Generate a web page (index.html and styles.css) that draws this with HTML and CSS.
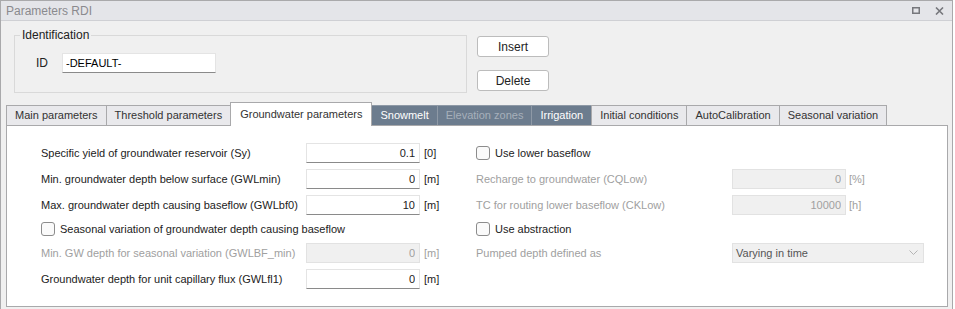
FILE: index.html
```html
<!DOCTYPE html>
<html lang="en">
  <head>
    <meta charset="UTF-8" />
    <title>Parameters RDI</title>
    <link rel="stylesheet" href="styles.css">
  </head>
  <body>
    <div class="window">
      <div class="titlebar">
        <span class="title">Parameters RDI</span>
        <span class="win-btns">
          <svg width="8" height="7" viewBox="0 0 8 7"><rect x="0.75" y="0.75" width="6.5" height="5.5" fill="none" stroke="#76777c" stroke-width="1.5"/></svg>
          <svg width="9" height="8" viewBox="0 0 9 8"><path d="M1 0.5 L8 7.5 M8 0.5 L1 7.5" stroke="#76777c" stroke-width="1.6"/></svg>
        </span>
      </div>

      <div class="body">
        <div class="top">
          <fieldset class="ident">
            <legend>Identification</legend>
            <label for="id">ID</label>
            <input type="text" id="id" class="id-input" value="-DEFAULT-" />
          </fieldset>
          <div class="actions">
            <button type="button" class="btn">Insert</button>
            <button type="button" class="btn">Delete</button>
          </div>
        </div>

        <div class="tabs">
          <div class="tab">Main parameters</div>
          <div class="tab">Threshold parameters</div>
          <div class="tab active">Groundwater parameters</div>
          <div class="tab dark">Snowmelt</div>
          <div class="tab dark off">Elevation zones</div>
          <div class="tab dark">Irrigation</div>
          <div class="tab">Initial conditions</div>
          <div class="tab">AutoCalibration</div>
          <div class="tab">Seasonal variation</div>
        </div>

        <div class="panel">
          <!-- row 1 -->
          <div class="lbl">Specific yield of groundwater reservoir (Sy)</div>
          <input class="num" type="text" value="0.1" />
          <div class="unit">[0]</div>
          <label class="check c-right"><span class="box"></span>Use lower baseflow</label>

          <!-- row 2 -->
          <div class="lbl">Min. groundwater depth below surface (GWLmin)</div>
          <input class="num" type="text" value="0" />
          <div class="unit">[m]</div>
          <div class="lbl off">Recharge to groundwater (CQLow)</div>
          <input class="num" type="text" value="0" disabled />
          <div class="unit off">[%]</div>

          <!-- row 3 -->
          <div class="lbl">Max. groundwater depth causing baseflow (GWLbf0)</div>
          <input class="num" type="text" value="10" />
          <div class="unit">[m]</div>
          <div class="lbl off">TC for routing lower baseflow (CKLow)</div>
          <input class="num" type="text" value="10000" disabled />
          <div class="unit off">[h]</div>

          <!-- row 4 -->
          <label class="check c-left"><span class="box"></span>Seasonal variation of groundwater depth causing baseflow</label>
          <label class="check c-right"><span class="box"></span>Use abstraction</label>

          <!-- row 5 -->
          <div class="lbl off">Min. GW depth for seasonal variation (GWLBF_min)</div>
          <input class="num" type="text" value="0" disabled />
          <div class="unit off">[m]</div>
          <div class="lbl off">Pumped depth defined as</div>
          <div class="select">
            <span>Varying in time</span>
            <svg width="9" height="5" viewBox="0 0 9 5"><path d="M0.5 0.5 L4.5 4.5 L8.5 0.5" fill="none" stroke="#b4b4b4"/></svg>
          </div>

          <!-- row 6 -->
          <div class="lbl">Groundwater depth for unit capillary flux (GWLfl1)</div>
          <input class="num" type="text" value="0" />
          <div class="unit">[m]</div>
        </div>
      </div>
    </div>
  </body>
</html>
```

FILE: styles.css
```css
* {
  box-sizing: border-box;
}
body {
  margin: 0;
  background: #ffffff;
  font-family: "Liberation Sans", Arial, sans-serif;
  font-size: 11px;
  color: #222;
}
.window {
  width: 953px;
  height: 309px;
  border: 1px solid #a9a9ab;
  border-bottom: none;
  background: #f0f0f0;
}
.titlebar {
  height: 20px;
  display: flex;
  align-items: center;
  justify-content: space-between;
  padding: 0 8px 0 5px;
  background: #e4e5e9;
  border-bottom: 1px solid #cfd0d4;
}
.title {
  color: #8a8a8e;
  font-size: 12px;
}
.win-btns {
  display: flex;
  align-items: center;
  gap: 15px;
}
.body {
  padding: 0 4px 0 4px;
}
.top {
  display: flex;
  align-items: flex-start;
  height: 83px;
}
.ident {
  margin: 7px 0 0 9px;
  padding: 0;
  width: 453px;
  height: 65px;
  border: 1px solid #d9d9d9;
  display: flex;
  align-items: center;
}
.ident legend {
  margin-left: 5px;
  padding: 0 2px;
  color: #222;
  font-size: 12px;
}
.ident label {
  margin: 0 0 8px 21px;
  width: 26px;
  font-size: 12px;
}
.id-input {
  width: 154px;
  height: 20px;
  margin-bottom: 8px;
  border: 1px solid #e4e4e4;
  border-bottom-color: #8a8a8a;
  background: #fff;
  font: inherit;
  padding: 0 3px;
}
.actions {
  display: flex;
  flex-direction: column;
  gap: 13px;
  margin: 15px 0 0 10px;
}
.btn {
  width: 72px;
  height: 21px;
  border: 1px solid #bcbcbc;
  border-radius: 3px;
  background: #fff;
  font: inherit;
  font-size: 12px;
  color: #222;
}
.tabs {
  display: flex;
  align-items: flex-end;
  height: 23px;
  margin-top: -2px;
  padding-left: 1px;
}
.tab {
  height: 20px;
  line-height: 19px;
  padding: 0 8px;
  border: 1px solid #a9a9ab;
  border-bottom: none;
  margin-right: -1px;
  background: #e9e9ec;
  color: #333;
  white-space: nowrap;
}
.tab.active {
  height: 24px;
  line-height: 23px;
  padding: 0 9px;
  background: #fff;
  position: relative;
  z-index: 1;
  margin-bottom: -1px;
}
.tab.dark {
  background: #6c7c8e;
  color: #fff;
  border-color: #8e99a6;
}
.tab.dark.off {
  color: #a7b0bb;
}
.panel {
  margin-left: 1px;
  width: 942px;
  height: 182px;
  background: #fff;
  border: 1px solid #a9a9ab;
  padding: 16px 0 0 34px;
  display: grid;
  grid-template-columns: 265px 114px 56px 256px 113px 79px;
  grid-template-rows: 21px 21px 21px 17px 21px 21px;
  row-gap: 5px;
  align-items: center;
}
.lbl {
  white-space: nowrap;
}
.off {
  color: #a0a0a0;
}
.num {
  width: 114px;
  height: 20px;
  border: 1px solid #e4e4e4;
  border-bottom-color: #8a8a8a;
  background: #fff;
  text-align: right;
  padding: 0 4px;
  font: inherit;
  color: #222;
}
.num:disabled {
  background: #f0f0f0;
  border-color: #e2e2e2;
  color: #a0a0a0;
}
.unit {
  padding-left: 4px;
}
.check {
  display: flex;
  align-items: center;
  gap: 5px;
  white-space: nowrap;
}
.c-left {
  grid-column: 1 / 4;
}
.c-right {
  grid-column: 4 / 7;
}
.box {
  width: 14px;
  height: 14px;
  border: 1px solid #8c8c8c;
  border-radius: 3px;
  background: #fafafa;
}
.select {
  grid-column: 5 / 7;
  width: 192px;
  height: 20px;
  display: flex;
  align-items: center;
  justify-content: space-between;
  padding: 0 5px 0 3px;
  background: #f0f0f0;
  border: 1px solid #e2e2e2;
  color: #555;
}
```
